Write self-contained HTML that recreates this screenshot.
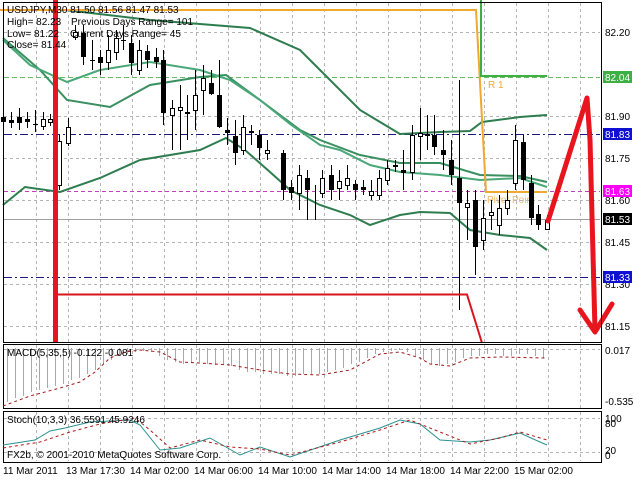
<!DOCTYPE html>
<html><head><meta charset="utf-8"><style>
html,body{margin:0;padding:0;background:#fff;width:640px;height:480px;overflow:hidden}
svg{display:block}
text{font-family:"Liberation Sans",sans-serif;font-size:10px;fill:#000}
</style></head><body>
<svg width="640" height="480" viewBox="0 0 640 480" xmlns="http://www.w3.org/2000/svg">
<rect width="640" height="480" fill="#fff"/>
<!-- grid -->
<g stroke="#b4b4b4" stroke-dasharray="3,3" stroke-width="1">
<path d="M36.5 3V342M68.5 3V342M100.5 3V342M132.5 3V342M164.5 3V342M196.5 3V342M228.5 3V342M260.5 3V342M292.5 3V342M324.5 3V342M356.5 3V342M388.5 3V342M420.5 3V342M452.5 3V342M484.5 3V342M516.5 3V342M548.5 3V342M580.5 3V342"/>
<path d="M36.5 345V408M68.5 345V408M100.5 345V408M132.5 345V408M164.5 345V408M196.5 345V408M228.5 345V408M260.5 345V408M292.5 345V408M324.5 345V408M356.5 345V408M388.5 345V408M420.5 345V408M452.5 345V408M484.5 345V408M516.5 345V408M548.5 345V408M580.5 345V408"/>
<path d="M36.5 412V461M68.5 412V461M100.5 412V461M132.5 412V461M164.5 412V461M196.5 412V461M228.5 412V461M260.5 412V461M292.5 412V461M324.5 412V461M356.5 412V461M388.5 412V461M420.5 412V461M452.5 412V461M484.5 412V461M516.5 412V461M548.5 412V461M580.5 412V461"/>
<path d="M4 32.5H600M4 116.5H600M4 158.5H600M4 200.5H600M4 242.5H600M4 284.5H600M4 326.5H600M4 349.5H600M4 418.5H600M4 452.5H600"/>
</g>
<line x1="4" y1="219.5" x2="600" y2="219.5" stroke="#a0a0a0"/>
<line x1="4" y1="77.5" x2="600" y2="77.5" stroke="#5fbf5f" stroke-dasharray="5,3"/>
<line x1="4" y1="134.5" x2="600" y2="134.5" stroke="#1a1a80" stroke-dasharray="8,3,2,3"/>
<line x1="4" y1="191.5" x2="600" y2="191.5" stroke="#c040c0" stroke-dasharray="4,3"/>
<line x1="4" y1="277.5" x2="600" y2="277.5" stroke="#1a1a80" stroke-dasharray="8,3,2,3"/>
<!-- bands -->
<g fill="none" stroke="#2e7d4f" stroke-width="2">
<polyline points="65,10 150,20 250,28 300,50 320,70 360,110 400,134 440,132 470,131 482,122 520,117 547,115"/>
<polyline points="3,205 25,187 60,192 100,178 140,160 200,150 226,138 245,150 270,172 290,190 320,205 350,215 370,225 400,215 420,212 450,213 470,230 500,235 530,238 547,250"/>
<polyline points="3,38 40,70 67,100 110,107 150,85 200,77 226,75 260,100 300,130 320,140 360,155 400,163 440,163 480,175 520,176 547,182" stroke="#3a8f60"/>
</g>
<polyline fill="none" stroke="#4aa878" stroke-width="2" points="3,40 30,65 67,82 100,70 150,62 200,70 230,80 260,100 290,124 320,145 340,150 370,165 400,172 440,175 480,180 520,178 547,187"/>
<!-- pivot/R1 -->
<polyline fill="none" stroke="#f0a830" stroke-width="2" points="0,10 476,10 486,192 547,192"/>
<polyline fill="none" stroke="#3cb043" stroke-width="2" points="481,0 481,76 547,76"/>
<text x="488" y="88" style="fill:#f0a830">R 1</text>
<text x="487" y="203" style="fill:#f0b860">Pivot Point</text>
<!-- candles -->
<g stroke="#000" stroke-width="1">
<path d="M3.5 110V128M11.5 112V128M19.5 108V130M27.5 112V128M35.5 110V132M43.5 112V130M50.5 114V126M59.5 135V190M68.5 118V146M75.5 25V40M83.5 25V65M92.5 40V70M100.5 50V75M108.5 35V70M116.5 30V60M123.5 25V50M131.5 35V75M139.5 40V75M147.5 45V68M156.5 48V68M163.5 50V125M172.5 100V150M180.5 85V150M187.5 95V140M195.5 70V130M203.5 65V115M211.5 70V95M219.5 60V128M227.5 118V145M235.5 120V165M243.5 115V155M251.5 125V145M259.5 130V160M267.5 140V160M283.5 150V200M291.5 180V200M299.5 165V210M307.5 170V220M315.5 185V220M322.5 170V198M331.5 165V200M339.5 170V200M347.5 165V190M355.5 180V200M363.5 180V195M371.5 180V200M379.5 170V200M387.5 160V185M395.5 160V172M403.5 150V190M412.5 125V180M420.5 108V160M427.5 115V150M434.5 115V155M443.5 130V170M451.5 140V185M459.5 80V310M467.5 190V240M475.5 190V275M483.5 200V250M491.5 200V230M499.5 195V235M507.5 190V215M515.5 125V190M523.5 135V190M531.5 175V225M538.5 205V230M547.5 215V230"/>
</g>
<g fill="#000">
<rect x="1" y="117" width="5" height="5"/><rect x="9" y="120" width="5" height="3"/><rect x="17" y="117" width="5" height="6"/><rect x="25" y="119" width="5" height="3"/><rect x="33" y="124" width="5" height="1"/>
<rect x="81" y="33" width="5" height="24"/><rect x="90" y="60" width="5" height="1"/><rect x="98" y="57" width="5" height="6"/><rect x="121" y="40" width="5" height="1"/><rect x="129" y="43" width="5" height="20"/><rect x="145" y="51" width="5" height="9"/><rect x="154" y="57" width="5" height="5"/><rect x="161" y="60" width="5" height="53"/><rect x="185" y="112" width="5" height="2"/><rect x="209" y="83" width="5" height="11"/><rect x="217" y="95" width="5" height="32"/><rect x="225" y="130" width="5" height="3"/><rect x="233" y="136" width="5" height="17"/><rect x="249" y="131" width="5" height="2"/><rect x="257" y="135" width="5" height="13"/><rect x="281" y="153" width="5" height="37"/><rect x="289" y="187" width="5" height="6"/><rect x="305" y="178" width="5" height="12"/><rect x="329" y="175" width="5" height="15"/><rect x="353" y="184" width="5" height="6"/><rect x="361" y="187" width="5" height="3"/><rect x="393" y="165" width="5" height="2"/><rect x="401" y="170" width="5" height="3"/><rect x="425" y="134" width="5" height="2"/><rect x="432" y="135" width="5" height="12"/><rect x="441" y="150" width="5" height="5"/><rect x="449" y="160" width="5" height="15"/><rect x="457" y="178" width="5" height="25"/><rect x="473" y="200" width="5" height="47"/><rect x="521" y="142" width="5" height="38"/><rect x="529" y="183" width="5" height="35"/><rect x="536" y="214" width="5" height="11"/>
</g>
<g fill="#fff" stroke="#000">
<rect x="41.5" y="119.5" width="4" height="7"/><rect x="48.5" y="119.5" width="4" height="3"/><rect x="57.5" y="141.5" width="4" height="44"/><rect x="66.5" y="127.5" width="4" height="16"/><rect x="73.5" y="32.5" width="4" height="5"/><rect x="106.5" y="50.5" width="4" height="12"/><rect x="114.5" y="38.5" width="4" height="14"/><rect x="137.5" y="50.5" width="4" height="20"/><rect x="170.5" y="108.5" width="4" height="7"/><rect x="178.5" y="107.5" width="4" height="3"/><rect x="193.5" y="95.5" width="4" height="15"/><rect x="201.5" y="78.5" width="4" height="12"/><rect x="241.5" y="127.5" width="4" height="23"/><rect x="265.5" y="150.5" width="4" height="3"/><rect x="297.5" y="175.5" width="4" height="18"/><rect x="320.5" y="178.5" width="4" height="15"/><rect x="337.5" y="181.5" width="4" height="7"/><rect x="345.5" y="178.5" width="4" height="7"/><rect x="369.5" y="191.5" width="4" height="4"/><rect x="377.5" y="178.5" width="4" height="17"/><rect x="385.5" y="168.5" width="4" height="12"/><rect x="410.5" y="135.5" width="4" height="37"/><rect x="418.5" y="133.5" width="4" height="3"/><rect x="465.5" y="203.5" width="4" height="4"/><rect x="481.5" y="218.5" width="4" height="22"/><rect x="489.5" y="212.5" width="4" height="3"/><rect x="497.5" y="208.5" width="4" height="17"/><rect x="505.5" y="200.5" width="4" height="8"/><rect x="513.5" y="140.5" width="4" height="43"/><rect x="545.5" y="220.5" width="4" height="9"/>
</g>
<!-- red lines -->
<rect x="53" y="0" width="5" height="343" fill="#e8141e"/>
<polyline fill="none" stroke="#d8141e" stroke-width="2" points="58,294.5 467,294.5 482,343"/>
<path d="M548 221 L587 98 L590 140 L595 330" fill="none" stroke="#e8141e" stroke-width="5" stroke-linejoin="round" stroke-linecap="round"/>
<path d="M580 310 L595 332 L612 304" fill="none" stroke="#e8141e" stroke-width="5" stroke-linejoin="round" stroke-linecap="round"/>
<!-- header text -->
<text x="7" y="13">USDJPY,M30  81.50 81.56 81.47 81.53</text>
<text x="7" y="25">High= 82.23</text><text x="71" y="25">Previous Days Range= 101</text>
<text x="7" y="37">Low= 81.22</text><text x="70" y="37">Current Days Range= 45</text>
<text x="7" y="48">Close= 81.44</text>
<!-- panel borders -->
<g fill="none" stroke="#000" stroke-width="1">
<rect x="3.5" y="2.5" width="598" height="340"/>
<rect x="3.5" y="344.5" width="598" height="64"/>
<rect x="3.5" y="411.5" width="598" height="51"/>
</g>
<!-- price axis labels -->
<text x="605" y="36">82.20</text><text x="605" y="120">81.90</text><text x="605" y="162">81.75</text><text x="605" y="204">81.60</text><text x="605" y="246">81.45</text><text x="605" y="288">81.30</text><text x="605" y="330">81.15</text>
<rect x="603" y="71" width="29" height="12" fill="#3cb043"/><text x="605" y="81" style="fill:#fff">82.04</text>
<rect x="603" y="128" width="29" height="12" fill="#1010d0"/><text x="605" y="138" style="fill:#fff">81.83</text>
<rect x="603" y="185" width="29" height="12" fill="#ff00ff"/><text x="605" y="195" style="fill:#fff">81.63</text>
<rect x="603" y="213" width="29" height="12" fill="#000"/><text x="605" y="223" style="fill:#fff">81.53</text>
<rect x="603" y="271" width="29" height="12" fill="#1010d0"/><text x="605" y="281" style="fill:#fff">81.33</text>
<!-- MACD -->
<g stroke="#a8a8a8" stroke-width="1">
<path d="M7.5 348V402M15.5 348V398M23.5 348V396M31.5 348V392M39.5 348V390M47.5 348V388M55.5 348V386M63.5 348V384M71.5 348V380M79.5 348V378M87.5 348V374M95.5 348V370M103.5 348V364M111.5 348V360M119.5 348V356M127.5 348V354M135.5 348V352M143.5 348V351M151.5 348V352M159.5 348V356M167.5 348V360M175.5 348V362M183.5 348V364M191.5 348V362M199.5 348V362M207.5 348V364M215.5 348V365M223.5 348V364M231.5 348V366M239.5 348V370M247.5 348V372M255.5 348V372M263.5 348V374M271.5 348V374M279.5 348V374M287.5 348V376M295.5 348V376M303.5 348V374M311.5 348V374M319.5 348V374M327.5 348V372M335.5 348V370M343.5 348V368M351.5 348V364M359.5 348V362M367.5 348V358M375.5 348V354M383.5 348V352M391.5 348V351M399.5 348V350M407.5 348V352M415.5 348V356M423.5 348V360M431.5 348V364M439.5 348V366M447.5 348V364M455.5 348V362M463.5 348V358M471.5 348V356M479.5 348V356M487.5 348V354M495.5 348V354M503.5 348V356M511.5 348V356M519.5 348V354M527.5 348V354M535.5 348V356M543.5 348V358"/>
</g>
<polyline fill="none" stroke="#a01818" stroke-dasharray="3,3" points="3,406 30,396 60,388 80,382 95,372 110,358 125,352 140,350 160,352 180,362 200,363 230,365 260,370 290,374 320,375 350,370 380,354 400,352 420,358 430,364 450,366 470,358 500,357 547,358"/>
<text x="7" y="356">MACD(5,35,5) -0.122 -0.081</text>
<text x="605" y="354">0.017</text><text x="605" y="405">-0.535</text>
<!-- Stoch -->
<polyline fill="none" stroke="#2a9090" points="3,445 35,440 50,431 65,428 90,422 130,420 140,425 160,450 180,448 210,438 240,455 260,447 290,457 340,440 380,428 400,420 420,424 440,440 470,442 490,440 520,433 540,442 547,445"/>
<polyline fill="none" stroke="#b01818" stroke-dasharray="3,3" points="3,448 40,442 70,432 100,424 135,418 150,430 170,448 200,440 230,447 260,449 290,455 340,442 380,430 410,420 440,432 470,444 500,438 520,432 547,440"/>
<text x="7" y="423">Stoch(10,3,3) 36.5591 45.9246</text>
<text x="7" y="458">FX2b, © 2001-2010 MetaQuotes Software Corp.</text>
<text x="605" y="422">100</text><text x="605" y="427">80</text><text x="605" y="454">20</text><text x="605" y="459">0</text>
<!-- time axis -->
<text x="3" y="474">11 Mar 2011</text><text x="66" y="474">13 Mar 17:30</text><text x="130" y="474">14 Mar 02:00</text><text x="194" y="474">14 Mar 06:00</text><text x="258" y="474">14 Mar 10:00</text><text x="322" y="474">14 Mar 14:00</text><text x="386" y="474">14 Mar 18:00</text><text x="450" y="474">14 Mar 22:00</text><text x="514" y="474">15 Mar 02:00</text>
</svg>
</body></html>
